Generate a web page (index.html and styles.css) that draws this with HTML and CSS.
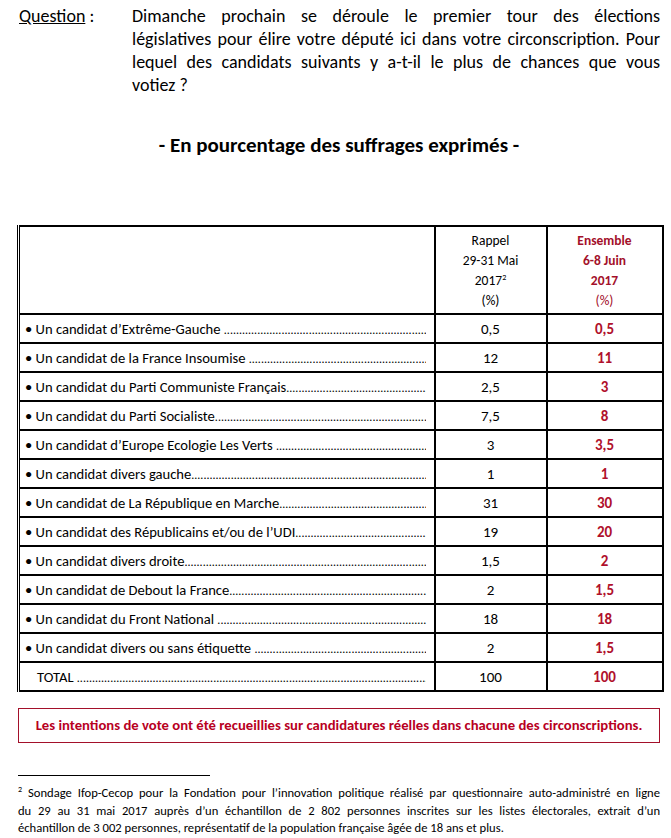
FILE: index.html
```html
<!DOCTYPE html>
<html lang="fr">
<head>
<meta charset="utf-8">
<title>Question</title>
<link rel="stylesheet" href="styles.css">
</head>
<body>
<div class="page">
  <div class="question">
    <div class="qlabel"><u>Question</u> :</div>
    <div class="qtext">
      <span class="jl">Dimanche prochain se déroule le premier tour des élections</span>
      <span class="jl">législatives pour élire votre député ici dans votre circonscription. Pour</span>
      <span class="jl">lequel des candidats suivants y a-t-il le plus de chances que vous</span>
      <span class="ll">votiez ?</span>
    </div>
  </div>

  <h2 class="subtitle">- En pourcentage des suffrages exprimés -</h2>

  <table class="results">
    <colgroup>
      <col class="c-label">
      <col class="c-prev">
      <col class="c-cur">
    </colgroup>
    <thead>
      <tr>
        <th></th>
        <th class="prev">Rappel<br>29-31 Mai<br>2017<sup>2</sup><br>(%)</th>
        <th class="cur"><b>Ensemble<br>6-8 Juin<br>2017</b><br>(%)</th>
      </tr>
    </thead>
    <tbody>
      <tr><td><div class="label"><span class="txt">• Un candidat d’Extrême-Gauche&nbsp;</span><span class="lead"></span></div></td><td class="v">0,5</td><td class="r">0,5</td></tr>
      <tr><td><div class="label"><span class="txt">• Un candidat de la France Insoumise&nbsp;</span><span class="lead"></span></div></td><td class="v">12</td><td class="r">11</td></tr>
      <tr><td><div class="label"><span class="txt">• Un candidat du Parti Communiste Français</span><span class="lead"></span></div></td><td class="v">2,5</td><td class="r">3</td></tr>
      <tr><td><div class="label"><span class="txt">• Un candidat du Parti Socialiste</span><span class="lead"></span></div></td><td class="v">7,5</td><td class="r">8</td></tr>
      <tr><td><div class="label"><span class="txt">• Un candidat d’Europe Ecologie Les Verts&nbsp;</span><span class="lead"></span></div></td><td class="v">3</td><td class="r">3,5</td></tr>
      <tr><td><div class="label"><span class="txt">• Un candidat divers gauche</span><span class="lead"></span></div></td><td class="v">1</td><td class="r">1</td></tr>
      <tr><td><div class="label"><span class="txt">• Un candidat de La République en Marche</span><span class="lead"></span></div></td><td class="v">31</td><td class="r">30</td></tr>
      <tr><td><div class="label"><span class="txt">• Un candidat des Républicains et/ou de l’UDI</span><span class="lead"></span></div></td><td class="v">19</td><td class="r">20</td></tr>
      <tr><td><div class="label"><span class="txt">• Un candidat divers droite</span><span class="lead"></span></div></td><td class="v">1,5</td><td class="r">2</td></tr>
      <tr><td><div class="label"><span class="txt">• Un candidat de Debout la France</span><span class="lead"></span></div></td><td class="v">2</td><td class="r">1,5</td></tr>
      <tr><td><div class="label"><span class="txt">• Un candidat du Front National&nbsp;</span><span class="lead"></span></div></td><td class="v">18</td><td class="r">18</td></tr>
      <tr><td><div class="label"><span class="txt">• Un candidat divers ou sans étiquette&nbsp;</span><span class="lead"></span></div></td><td class="v">2</td><td class="r">1,5</td></tr>
      <tr><td><div class="label total"><span class="txt">TOTAL&nbsp;</span><span class="lead"></span></div></td><td class="v">100</td><td class="r">100</td></tr>
    </tbody>
  </table>

  <div class="notice">Les intentions de vote ont été recueillies sur candidatures réelles dans chacune des circonscriptions.</div>

  <div class="footnote">
    <hr class="rule">
    <p class="fn">
      <span class="jl"><sup>2</sup> Sondage Ifop-Cecop pour la Fondation pour l’innovation politique réalisé par questionnaire auto-administré en ligne</span>
      <span class="jl">du 29 au 31 mai 2017 auprès d’un échantillon de 2 802 personnes inscrites sur les listes électorales, extrait d’un</span>
      <span class="ll">échantillon de 3 002 personnes, représentatif de la population française âgée de 18 ans et plus.</span>
    </p>
  </div>
</div>
</body>
</html>
```

FILE: styles.css
```css
* { box-sizing: border-box; }

body {
  margin: 0;
  background: #ffffff;
  color: #000000;
  font-family: Carlito, Lato, "Liberation Sans", sans-serif;
}

.page {
  width: 671px;
  padding: 5px 11px 0 18px;
}

.question {
  display: grid;
  grid-template-columns: 114px 1fr;
  font-size: 18px;
  line-height: 23px;
}

.qlabel {
  padding-left: 1px;
}

.qtext .jl {
  display: block;
  text-align: justify;
  text-align-last: justify;
  white-space: nowrap;
}

.qtext .ll {
  display: block;
}

.subtitle {
  margin: 36px 0 0;
  text-align: center;
  font-size: 21px;
  line-height: 24px;
  font-weight: 700;
}

.results {
  margin-top: 68px;
  width: 644px;
  margin-left: -1px;
  table-layout: fixed;
  border-collapse: collapse;
  border-top: 2px solid #000;
  border-right: 2px solid #000;
  border-bottom: 2px solid #000;
  border-left: 3px double #000;
  font-size: 14.6px;
}

.c-label { width: 416px; }
.c-prev { width: 112px; }
.c-cur { width: 116px; }

.results th,
.results td {
  border: 2px solid #000;
  padding: 0;
}

.results th {
  height: 88px;
  font-weight: 400;
  font-size: 13.5px;
  line-height: 20px;
  text-align: center;
  vertical-align: middle;
  padding-top: 1px;
}

.results th sup {
  font-size: 8px;
  line-height: 0;
  vertical-align: 5px;
}

.results th.cur {
  color: #a3102a;
}

.results th.cur b {
  font-weight: 700;
}

.results td {
  height: 29px;
  vertical-align: middle;
}

.label {
  display: flex;
  align-items: baseline;
  padding: 0 8px 0 5px;
  white-space: nowrap;
  overflow: hidden;
}

.label.total {
  padding-left: 17px;
}

.label .lead {
  flex: 1;
  min-width: 0;
  overflow: hidden;
  font-size: 12px;
}

.label .lead::before {
  content: "....................................................................................................................................................................................";
}

.v {
  text-align: center;
  font-size: 15px;
}

.r {
  text-align: center;
  font-size: 15px;
  font-weight: 700;
  color: #b0102c;
}

.notice {
  margin-top: 16px;
  height: 35px;
  border: 1.5px solid #a3102a;
  color: #b8001f;
  font-weight: 700;
  font-size: 14.7px;
  line-height: 32px;
  text-align: center;
}

.footnote {
  margin-top: 32px;
}

.rule {
  width: 192px;
  margin: 0;
  border: 0;
  border-top: 1px solid #000;
}

.fn {
  margin: 8px 0 0;
  font-size: 12.6px;
  line-height: 17.5px;
}

.fn .jl {
  display: block;
  text-align: justify;
  text-align-last: justify;
}

.fn .ll {
  display: block;
}

.fn sup {
  font-size: 8px;
  line-height: 0;
  vertical-align: 5px;
}
```
